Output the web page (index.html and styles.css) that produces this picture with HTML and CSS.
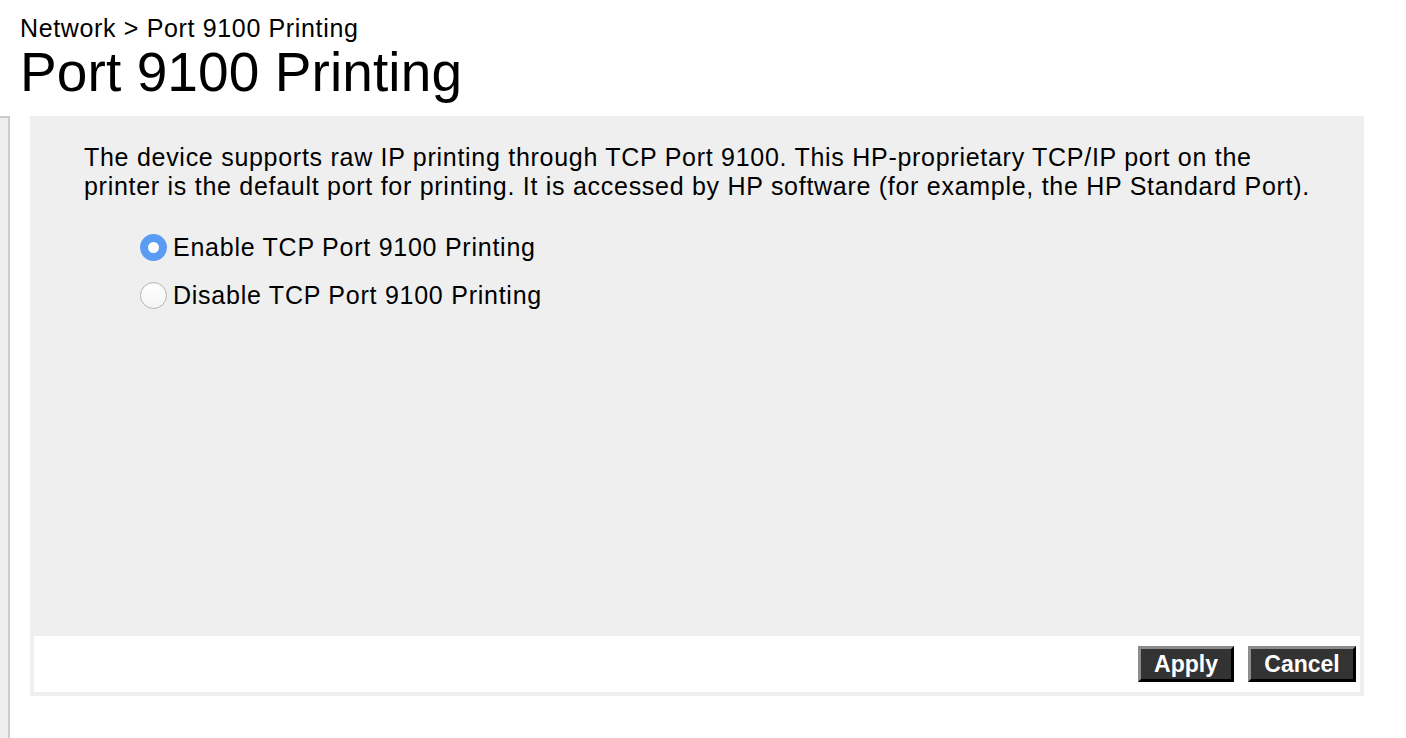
FILE: index.html
```html
<!DOCTYPE html>
<html>
<head>
<meta charset="utf-8">
<link rel="stylesheet" href="styles.css">
</head>
<body>
<div class="page">
  <header class="header">
    <div class="breadcrumb">Network &gt; Port 9100 Printing</div>
    <h1 class="title">Port 9100 Printing</h1>
  </header>
  <div class="main">
    <div class="nav-stub"></div>
    <div class="panel">
      <div class="panel-body">
        <p class="desc">The device supports raw IP printing through TCP Port 9100. This HP-proprietary TCP/IP port on the printer is the default port for printing. It is accessed by HP software (for example, the HP Standard Port).</p>
        <div class="options">
          <label class="option"><input type="radio" name="p9100" class="radio" checked><span>Enable TCP Port 9100 Printing</span></label>
          <label class="option"><input type="radio" name="p9100" class="radio"><span>Disable TCP Port 9100 Printing</span></label>
        </div>
      </div>
      <div class="footer">
        <button class="btn">Apply</button>
        <button class="btn">Cancel</button>
      </div>
    </div>
  </div>
</div>
</body>
</html>
```
FILE: styles.css
```css
html, body {
  margin: 0;
  padding: 0;
  background: #fff;
}
body {
  font-family: "Liberation Sans", Arial, Helvetica, sans-serif;
  color: #000;
}
.page {
  display: flex;
  flex-direction: column;
  height: 100vh;
  overflow: hidden;
}
.header {
  padding: 12px 0 0 20px;
  height: 116px;
  box-sizing: border-box;
}
.breadcrumb {
  font-size: 25px;
  line-height: 32px;
  letter-spacing: 0.65px;
}
.title {
  margin: 0;
  font-weight: normal;
  font-size: 55px;
  line-height: 56px;
  letter-spacing: 0.1px;
}
.main {
  flex: 1;
  display: flex;
  align-items: flex-start;
}
.nav-stub {
  align-self: stretch;
  width: 8px;
  background: #efefef;
  border-top: 2px solid #cccccc;
  border-right: 2px solid #cccccc;
}
.panel {
  margin-left: 20px;
  width: 1334px;
  background: #efefef;
  padding: 0 4px 4px 4px;
  box-sizing: border-box;
}
.panel-body {
  height: 520px;
  padding: 27px 0 0 50px;
  box-sizing: border-box;
}
.desc {
  margin: 0;
  font-size: 25px;
  line-height: 29px;
  letter-spacing: 0.72px;
  width: 1250px;
}
.options {
  margin-top: 32px;
  padding-left: 56px;
  display: flex;
  flex-direction: column;
  gap: 20px;
}
.option {
  display: flex;
  align-items: center;
  font-size: 25px;
  line-height: 28px;
  letter-spacing: 0.75px;
}
.radio {
  appearance: none;
  -webkit-appearance: none;
  margin: 0 6px 0 0;
  width: 27px;
  height: 27px;
  border-radius: 50%;
  box-sizing: border-box;
  border: 1px solid #b5b5b5;
  background: linear-gradient(#ffffff, #f4f4f4);
  box-shadow: inset 0 1px 1px rgba(0,0,0,0.05);
}
.radio:checked {
  border: 8.5px solid #5a9cf4;
  background: #fff;
  box-shadow: none;
}
.footer {
  background: #fff;
  height: 56px;
  display: flex;
  justify-content: flex-end;
  align-items: center;
  gap: 14px;
  padding: 0 4px 0 0;
}
.btn {
  font-family: "Liberation Sans", Arial, Helvetica, sans-serif;
  font-weight: bold;
  font-size: 23px;
  color: #fff;
  background: #333333;
  height: 36px;
  padding: 0;
  border-style: solid;
  border-width: 3px;
  border-color: #8c8c8c #000 #000 #8c8c8c;
  line-height: 28px;
  cursor: pointer;
}
.btn:first-child {
  width: 96px;
}
.btn:last-child {
  width: 108px;
}
```
